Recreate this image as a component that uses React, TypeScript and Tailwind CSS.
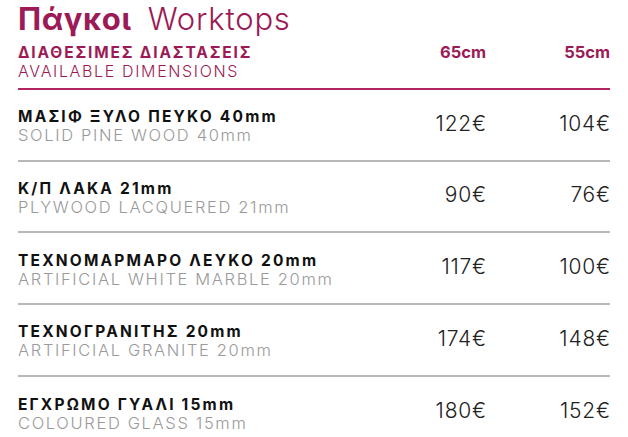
const ROWS = [
  { gr: 'ΜΑΣΙΦ ΞΥΛΟ ΠΕΥΚΟ 40mm', en: 'SOLID PINE WOOD 40mm', p65: '122€', p55: '104€' },
  { gr: 'Κ/Π ΛΑΚΑ 21mm', en: 'PLYWOOD LACQUERED 21mm', p65: '90€', p55: '76€' },
  { gr: 'ΤΕΧΝΟΜΑΡΜΑΡΟ ΛΕΥΚΟ 20mm', en: 'ARTIFICIAL WHITE MARBLE 20mm', p65: '117€', p55: '100€' },
  { gr: 'ΤΕΧΝΟΓΡΑΝΙΤΗΣ 20mm', en: 'ARTIFICIAL GRANITE 20mm', p65: '174€', p55: '148€' },
  { gr: 'ΕΓΧΡΩΜΟ ΓΥΑΛΙ 15mm', en: 'COLOURED GLASS 15mm', p65: '180€', p55: '152€' },
]

export default function App() {
  return (
    <main className="w-[628px] h-[437px] overflow-hidden bg-white font-['Inter','Noto_Sans',sans-serif]">
      <div className="w-[592px] ml-[18px]">
        {/* Title */}
        <h1 className="text-[31px] leading-[38px] text-[#9c1a55]">
          <span className="font-bold tracking-[0.6px]">Πάγκοι</span>
          <span className="font-light tracking-[0.8px] ml-[16px]">Worktops</span>
        </h1>

        {/* Header */}
        <div className="grid grid-cols-[1fr_124px_124px] items-start pt-[5px] pb-[7px] border-b-2 border-[#b0245f]">
          <div>
            <div className="text-[15.5px] leading-[19px] font-bold tracking-[1.85px] text-[#9c1a55]">
              ΔΙΑΘΕΣΙΜΕΣ ΔΙΑΣΤΑΣΕΙΣ
            </div>
            <div className="text-[16px] leading-[19px] font-light tracking-[1.65px] text-[#9c1a55]">
              AVAILABLE DIMENSIONS
            </div>
          </div>
          <div className="text-right text-[16.5px] leading-[19px] font-bold text-[#9c1a55]">65cm</div>
          <div className="text-right text-[16.5px] leading-[19px] font-bold text-[#9c1a55]">55cm</div>
        </div>

        {/* Rows */}
        {ROWS.map((r, i) => (
          <div
            key={r.gr}
            className={`grid grid-cols-[1fr_124px_124px] items-center h-[71.7px] ${
              i < ROWS.length - 1 ? 'border-b-2 border-[#b8b8b8]' : ''
            }`}
          >
            <div className="pt-[3px]">
              <div className="text-[15.5px] leading-[18px] font-bold tracking-[2.2px] text-[#111]">{r.gr}</div>
              <div className="text-[16.5px] leading-[18px] font-light tracking-[1.65px] text-[#9a9a9a]">{r.en}</div>
            </div>
            <div className="pb-[3px] -mr-[1px] text-right text-[21px] font-light tracking-[0.8px] text-[#222]">{r.p65}</div>
            <div className="pb-[3px] -mr-[1px] text-right text-[21px] font-light tracking-[0.8px] text-[#222]">{r.p55}</div>
          </div>
        ))}
      </div>
    </main>
  )
}
